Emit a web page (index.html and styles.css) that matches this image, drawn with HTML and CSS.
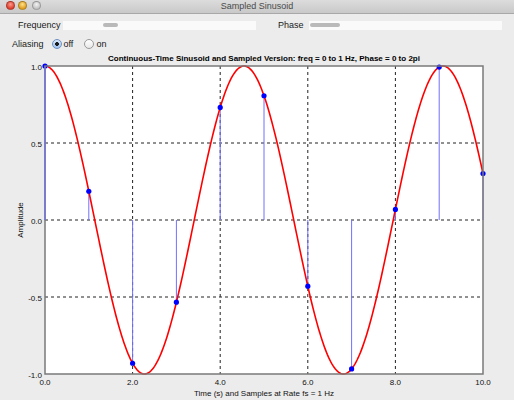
FILE: index.html
```
<!DOCTYPE html>
<html lang="en">
<head>
    <meta charset="UTF-8">
    <title>Sampled Sinusoid</title>
    <link rel="stylesheet" href="styles.css">
</head>
<body>
    <div class="window">
        <!-- title bar -->
        <div class="titlebar">
            <div class="lights">
                <span class="light red"></span>
                <span class="light yellow"></span>
                <span class="light gray"></span>
            </div>
            <span class="win-title">Sampled Sinusoid</span>
        </div>

        <!-- sliders -->
        <div class="slider-row">
            <label class="slider-label freq-label">Frequency</label>
            <div class="track"><span class="thumb freq-thumb"></span></div>
            <label class="slider-label phase-label">Phase</label>
            <div class="track"><span class="thumb phase-thumb"></span></div>
        </div>

        <!-- aliasing radios -->
        <div class="radio-row">
            <span class="radio-label">Aliasing</span>
            <span class="radio checked"></span><span class="radio-text">off</span>
            <span class="radio"></span><span class="radio-text">on</span>
        </div>

        <!-- plot -->
        <svg class="plot" id="plot" width="514" height="348" viewBox="0 52 514 348">
            <text class="plot-title" x="264" y="61">Continuous-Time Sinusoid and Sampled Version: freq = 0 to 1 Hz, Phase = 0 to 2pi</text>
            <rect x="45" y="66" width="438" height="308" fill="#fff"/>
            <g id="grid" class="grid"></g>
            <g id="stems" class="stems"></g>
            <path id="curve" class="curve" d=""/>
            <g id="dots" class="dots"></g>
            <path class="frame" d="M45 66 H483 V374 H45 Z"/>
            <line class="stem" x1="45" y1="66" x2="45" y2="220"/>
            <g id="ticks" class="ticks"></g>
            <text class="axis-label" x="264" y="396">Time (s) and Samples at Rate fs = 1 Hz</text>
            <text class="axis-label" transform="translate(23 220) rotate(-90)">Amplitude</text>
        </svg>
    </div>

    <script>
    // plot box
    const X0 = 45, X1 = 483, YTOP = 66, YBOT = 374;
    const W = 0.04 * 2 * Math.PI * 5.503; // rad/s
    const sx = t => X0 + (X1 - X0) * t / 10;
    const sy = v => (YTOP + YBOT) / 2 - v * (YBOT - YTOP) / 2;
    const NS = 'http://www.w3.org/2000/svg';

    function el(tag, attrs, parent) {
        const e = document.createElementNS(NS, tag);
        for (const k in attrs) e.setAttribute(k, attrs[k]);
        parent.appendChild(e);
        return e;
    }

    // continuous curve
    let d = '';
    for (let i = 0; i <= 400; i++) {
        const t = i * 10 / 400;
        d += (i ? 'L' : 'M') + sx(t).toFixed(2) + ' ' + sy(Math.cos(W * t)).toFixed(2);
    }
    document.getElementById('curve').setAttribute('d', d);

    // grid lines
    const grid = document.getElementById('grid');
    [2, 4, 6, 8].forEach(t => el('line', { x1: sx(t), y1: YTOP, x2: sx(t), y2: YBOT }, grid));
    [0.5, 0, -0.5].forEach(v => el('line', { x1: X0, y1: sy(v), x2: X1, y2: sy(v) }, grid));

    // samples
    const stems = document.getElementById('stems');
    const dots = document.getElementById('dots');
    for (let n = 0; n <= 10; n++) {
        const v = Math.cos(W * n);
        el('line', { x1: sx(n), y1: sy(0), x2: sx(n), y2: sy(v), class: 'stem' }, stems);
        el('circle', { cx: sx(n), cy: sy(v), r: 2.6 }, dots);
    }

    // tick labels
    const ticks = document.getElementById('ticks');
    ['1.0', '0.5', '0.0', '-0.5', '-1.0'].forEach((s, i) => {
        const t = el('text', { x: 42, y: YTOP + i * 77 + 3.5, class: 'ytick' }, ticks);
        t.textContent = s;
    });
    ['0.0', '2.0', '4.0', '6.0', '8.0', '10.0'].forEach((s, i) => {
        const t = el('text', { x: sx(i * 2), y: 385, class: 'xtick' }, ticks);
        t.textContent = s;
    });
    </script>
</body>
</html>
```

FILE: styles.css
```
* {
    margin: 0;
    padding: 0;
    box-sizing: border-box;
}

body {
    background: #ececec;
    font-family: "Liberation Sans", Arial, sans-serif;
    color: #1a1a1a;
    overflow: hidden;
}

.window {
    width: 514px;
    height: 400px;
    display: flex;
    flex-direction: column;
    background: #ececec;
}

/* title bar */
.titlebar {
    position: relative;
    height: 14px;
    flex: none;
    display: flex;
    align-items: center;
    justify-content: center;
    background: linear-gradient(#dcdcdc, #c9c9c9);
    border-bottom: 1px solid #a8a8a8;
}

.lights {
    position: absolute;
    left: 6px;
    top: 1px;
    display: flex;
    gap: 2px;
}

.light {
    width: 9px;
    height: 9px;
    border-radius: 50%;
    border: 1px solid rgba(0,0,0,0.25);
}

.light.red { background: radial-gradient(circle at 50% 35%, #ff9a8c, #e0402e 70%); }
.light.yellow { background: radial-gradient(circle at 50% 35%, #ffe08a, #e0a020 70%); margin-left: 1px; }
.light.gray { background: radial-gradient(circle at 50% 35%, #f2f2f2, #c4c4c4 70%); margin-left: 3px; }

.win-title {
    font-size: 9px;
    color: #4a4a4a;
    margin-top: -2px;
}

/* sliders */
.slider-row {
    height: 22px;
    flex: none;
    display: flex;
    align-items: center;
    font-size: 9px;
}

.slider-label { padding-top: 0; }
.freq-label { margin-left: 18px; width: 45px; }
.phase-label { margin-left: 22px; width: 31px; }

.track {
    width: 193px;
    height: 9px;
    background: #fafafa;
    display: flex;
    align-items: center;
}

.thumb {
    height: 4px;
    border-radius: 2px;
    background: #b9b9b9;
}

.freq-thumb { width: 15px; margin-left: 40px; }
.phase-thumb { width: 30px; margin-left: 1px; }

/* radios */
.radio-row {
    height: 16px;
    flex: none;
    display: flex;
    align-items: center;
    font-size: 9px;
}

.radio-label { margin-left: 12px; margin-right: 8px; }

.radio {
    width: 10px;
    height: 10px;
    border-radius: 50%;
    border: 1px solid #9a9a9a;
    background: linear-gradient(#ffffff, #e8e8e8);
    margin-right: 2px;
}

.radio.checked {
    border-color: #6d8fc4;
    background: radial-gradient(circle, #1a1a1a 1.6px, transparent 2.2px), linear-gradient(#d8e8fb, #9fc2ef);
}

.radio-text { margin-right: 11px; }

/* plot */
.plot {
    display: block;
    flex: none;
}

.plot-title {
    font-size: 8px;
    font-weight: bold;
    text-anchor: middle;
    fill: #000;
}

.grid line {
    stroke: #222;
    stroke-width: 1;
    stroke-dasharray: 3 3;
}

.frame {
    fill: none;
    stroke: #7a7a7a;
    stroke-width: 1.5;
}

.curve {
    fill: none;
    stroke: #ff0000;
    stroke-width: 1.6;
}

.stem {
    stroke: #7070ff;
    stroke-width: 1;
}

.dots circle { fill: #0000ff; }

.ytick, .xtick, .axis-label {
    font-size: 8px;
    fill: #111;
}

.ytick { text-anchor: end; }
.xtick { text-anchor: middle; }
.axis-label { text-anchor: middle; }
```
